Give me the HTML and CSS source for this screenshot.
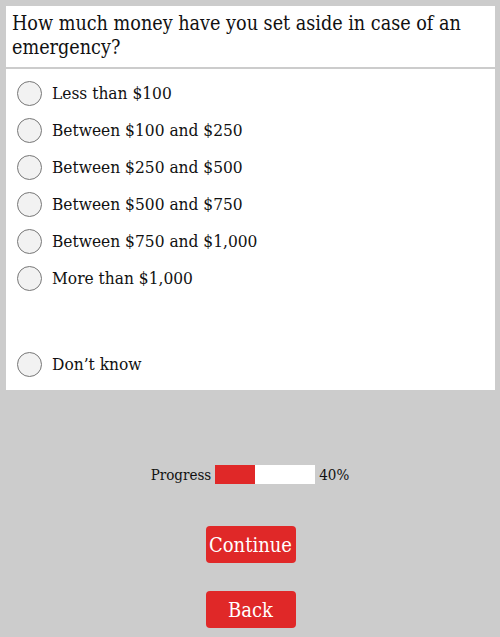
FILE: index.html
```html
<!DOCTYPE html>
<html>
<head>
<meta charset="utf-8">
<link rel="stylesheet" href="styles.css">
</head>
<body>
<div class="panel">
  <div class="question">How much money have you set aside in case of an emergency?</div>
  <div class="options">
    <div class="opt"><span class="radio"></span><span class="label">Less than $100</span></div>
    <div class="opt"><span class="radio"></span><span class="label">Between $100 and $250</span></div>
    <div class="opt"><span class="radio"></span><span class="label">Between $250 and $500</span></div>
    <div class="opt"><span class="radio"></span><span class="label">Between $500 and $750</span></div>
    <div class="opt"><span class="radio"></span><span class="label">Between $750 and $1,000</span></div>
    <div class="opt"><span class="radio"></span><span class="label">More than $1,000</span></div>
    <div class="opt dk"><span class="radio"></span><span class="label">Don’t know</span></div>
  </div>
</div>
<div class="progress">
  <span class="ptext">Progress</span>
  <span class="bar"><span class="fill"></span></span>
  <span class="ptext">40%</span>
</div>
<div class="buttons">
  <button class="btn">Continue</button>
  <button class="btn">Back</button>
</div>
</body>
</html>
```
FILE: styles.css
```css
html, body { margin: 0; padding: 0; }
body {
  background: #cccccc;
  font-family: "DejaVu Serif", "Liberation Serif", serif;
  font-stretch: condensed;
  color: #111;
  padding: 6px 5px 0 6px;
  width: 500px;
  box-sizing: border-box;
}
.panel { background: #fff; }
.question {
  font-size: 19.6px;
  line-height: 24px;
  padding: 6px 6px 7px 6px;
  height: 48px;
  border-bottom: 2px solid #cccccc;
}
.options { padding: 6px 0 0 11px; height: 321px; box-sizing: border-box; }
.opt { display: flex; align-items: center; height: 37px; }
.label { font-size: 17.2px; position: relative; top: -1px; }
.opt.dk { margin-top: 49px; }
.radio {
  width: 23px; height: 23px;
  border: 1px solid #777;
  border-radius: 50%;
  background: #f2f2f2;
  margin-right: 10px;
  flex: none;
}
.progress {
  display: flex; align-items: center; justify-content: center;
  margin-top: 75px;
  padding-right: 1px;
  gap: 4px;
  font-size: 15px;
}
.bar { width: 100px; height: 19px; background: #fff; display: block; }
.fill { display: block; width: 40px; height: 100%; background: #e02828; }
.buttons { display: flex; flex-direction: column; align-items: center; gap: 28px; margin-top: 42px; }
.btn {
  width: 90px; height: 37px;
  background: #e02828; color: #fff;
  border: none; border-radius: 4px;
  font-family: inherit; font-stretch: condensed;
  font-size: 20px; padding: 0;
}
```
